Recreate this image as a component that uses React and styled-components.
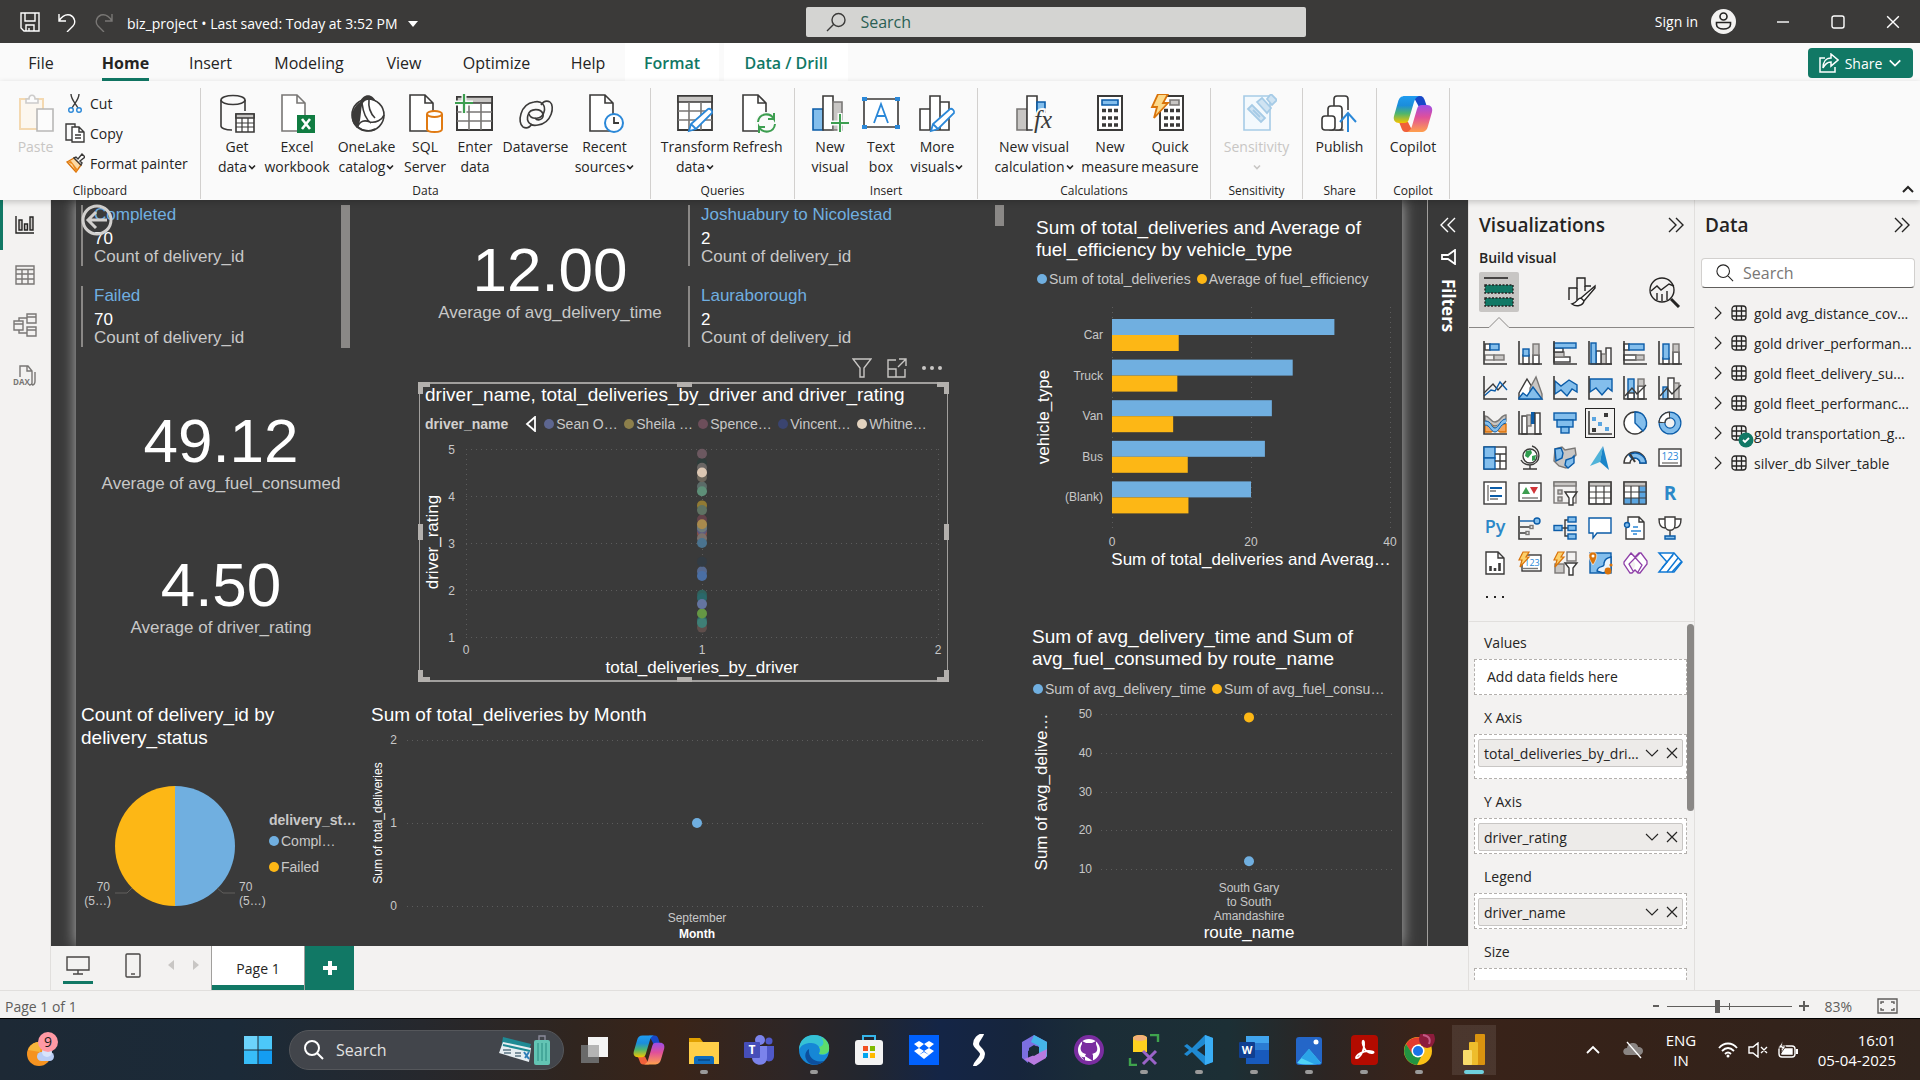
import React from 'react';
import styled, { createGlobalStyle, css } from 'styled-components';

const ui = '"Open Sans", "Noto Sans", sans-serif';
const report = '"Liberation Sans", Arial, sans-serif';

const c = {
  ink: '#252423',
  line: '#3b3a39',
  green: '#117865',
  pane: '#f3f2f1',
  sheet: '#3a3a3a',
  soft: '#c8c8c8',
  blue: '#70afe0',
  gold: '#fdb715',
  bf: '#83beec',
  bs: '#0b5ca8',
  gf: '#c8c6c4',
  gs: '#797775',
};

const GlobalStyle = createGlobalStyle`
  *, *::before, *::after { box-sizing: border-box; }
  body { margin: 0; background: ${c.pane}; color: ${c.ink}; font-family: ${ui}; font-size: 14px; overflow: hidden; }
  button, input { font: inherit; color: inherit; }
  button { padding: 0; border: 0; background: none; cursor: pointer; }
  svg { display: block; flex: none; }
  h2, p, ul, dl, dd { margin: 0; padding: 0; }
  ul { list-style: none; }
`;

/* ---------- shell ---------- */

const Shell = styled.div`
  display: flex;
  flex-direction: column;
  height: 100vh;
`;

const TitleBar = styled.header`
  display: grid;
  grid-template-columns: 42% 26% 1fr;
  align-items: center;
  flex: none;
  height: 43px;
  background: #3b3a39;
  color: #fff;
`;

const QuickTools = styled.div`
  display: flex;
  align-items: center;
  gap: 9px;
  padding-left: 16px;
`;

const IconButton = styled.button`
  display: grid;
  place-items: center;
  flex: none;
  width: ${(p) => p.$w || 20}px;
  height: ${(p) => p.$h || 20}px;
  color: ${(p) => p.$color || 'inherit'};
`;

const FileName = styled.button`
  display: flex;
  align-items: center;
  gap: 10px;
  white-space: nowrap;
  line-height: 20px;
  padding-top: 5px;
`;

const TitleSearch = styled.label`
  display: flex;
  align-items: center;
  gap: 14px;
  height: 30px;
  padding: 0 20px;
  border-radius: 2px;
  background: #d4d4d2;
  color: #3b3a39;
  font-size: 16px;
`;

const BareInput = styled.input`
  flex: 1;
  min-width: 0;
  border: 0;
  outline: 0;
  padding: 0;
  background: none;
  &::placeholder { color: ${(p) => p.$tone}; opacity: 1; }
`;

const WindowTools = styled.div`
  display: flex;
  align-items: center;
  justify-content: flex-end;
`;

const SignIn = styled.button`
  display: flex;
  align-items: center;
  gap: 13px;
  margin-right: 19px;
`;

/* ---------- ribbon ---------- */

const TabRow = styled.nav`
  display: flex;
  align-items: stretch;
  flex: none;
  height: 38px;
  background: #fafafa;
`;

const Tab = styled.button`
  position: relative;
  width: ${(p) => p.$w}px;
  font-size: 16px;
  line-height: 36px;
  padding-top: 2px;
  ${(p) => p.$active && css`
    font-weight: 700;
    &::after {
      content: '';
      position: absolute;
      left: 20px;
      right: 20px;
      bottom: 0;
      height: 3px;
      background: ${c.green};
    }
  `}
  ${(p) => p.$context && css`
    margin-right: 5px;
    background: #fff;
    color: ${c.green};
    font-weight: 600;
  `}
`;

const ShareButton = styled.button`
  display: flex;
  align-items: center;
  justify-content: center;
  gap: 6px;
  width: 105px;
  height: 30px;
  margin: 5px 7px 0 auto;
  border-radius: 4px;
  background: ${c.green};
  color: #fff;
`;

const Ribbon = styled.section`
  position: relative;
  z-index: 2;
  display: flex;
  flex: none;
  height: 119px;
  padding: 7px 0 1px;
  background: #fafafa;
  box-shadow: 0 2px 6px rgba(0, 0, 0, 0.2);
`;

const Group = styled.div`
  display: flex;
  flex-direction: column;
  flex: none;
  padding: 0 9px;
  border-right: 1px solid #d2d0ce;
`;

const GroupBody = styled.div`
  display: flex;
  flex: 1;
`;

const GroupLabel = styled.div`
  font-size: 12px;
  line-height: 16px;
  text-align: center;
`;

const ToolButton = styled.button`
  display: flex;
  flex-direction: column;
  align-items: center;
  width: ${(p) => p.$w}px;
  padding-top: 6px;
  line-height: 20px;
  white-space: nowrap;
  color: ${(p) => (p.$off ? '#c8c6c4' : 'inherit')};
  svg.big { margin-bottom: 3px; }
`;

const ToolLine = styled.span`
  display: flex;
  align-items: center;
  gap: 1px;
  height: 20px;
  font-size: 14px;
`;

const ClipList = styled.div`
  display: flex;
  flex-direction: column;
  width: 129px;
`;

const ClipButton = styled.button`
  display: flex;
  align-items: center;
  gap: 5px;
  height: 30px;
  padding-left: 3px;
  font-size: 14px;
  white-space: nowrap;
`;

const Collapse = styled.div`
  display: flex;
  align-items: flex-end;
  margin-left: auto;
  padding: 0 5px 3px 0;
`;

/* ---------- workspace ---------- */

const Work = styled.main`
  display: flex;
  flex: 1;
  min-height: 0;
`;

const Rail = styled.nav`
  display: flex;
  flex-direction: column;
  flex: none;
  width: 51px;
  border-right: 1px solid #e1dfdd;
`;

const RailButton = styled.button`
  display: grid;
  place-items: center;
  height: 50px;
  border-left: 3px solid ${(p) => (p.$active ? c.green : 'transparent')};
  padding-right: 4px;
  color: ${(p) => (p.$active ? '#252423' : '#797775')};
`;

const Center = styled.div`
  display: flex;
  flex-direction: column;
  flex: 1;
  min-width: 0;
`;

const Stage = styled.div`
  display: flex;
  flex: 1;
  min-height: 0;
  background: #393939;
`;

const Canvas = styled.div`
  display: flex;
  flex: 1;
  min-width: 0;
  padding: 0 25px;
  overflow: hidden;
`;

const Sheet = styled.div`
  position: relative;
  display: flex;
  flex: 1;
  min-width: 0;
  background: ${c.sheet};
  box-shadow: 0 0 14px #b4b4b4;
  color: #fff;
  font-family: ${report};
`;

const SheetLeft = styled.div`
  display: flex;
  flex-direction: column;
  flex: 1;
  min-width: 0;
  padding: 5px 0 0 5px;
`;

const SheetRight = styled.div`
  display: flex;
  flex-direction: column;
  gap: 52px;
  flex: none;
  width: 370px;
  padding-top: 17px;
`;

const Row = styled.div`
  display: flex;
  flex: none;
  height: ${(p) => p.$h}px;
`;

const Filters = styled.aside`
  display: flex;
  flex-direction: column;
  align-items: center;
  gap: 14px;
  width: 41px;
  padding-top: 15px;
  border-left: 1px solid #a19f9d;
  color: #fff;
`;

const FilterLabel = styled.span`
  writing-mode: vertical-rl;
  font-size: 17px;
  font-weight: 700;
  line-height: 20px;
`;

/* ---------- visuals ---------- */

const MultiRow = styled.div`
  display: flex;
  justify-content: space-between;
  align-items: flex-start;
  width: ${(p) => p.$w}px;
`;

const MultiList = styled.dl`
  display: flex;
  flex-direction: column;
  gap: 20px;
`;

const MultiItem = styled.div`
  height: 61px;
  padding-left: 11px;
  border-left: 2px solid #8a8886;
  font-size: 17px;
  line-height: 20px;
  white-space: nowrap;
  dt { color: ${c.blue}; height: 24px; }
  dd + dd { color: ${c.soft}; line-height: 16px; }
`;

const ScrollThumb = styled.div`
  flex: none;
  width: 9px;
  height: ${(p) => p.$h}px;
  background: #8a8886;
`;

const BigCard = styled.div`
  display: flex;
  flex-direction: column;
  align-items: center;
  width: ${(p) => p.$w}px;
  padding-top: ${(p) => p.$top}px;
  white-space: nowrap;
`;

const BigNumber = styled.div`
  font-size: 62px;
  line-height: 61px;
`;

const BigLabel = styled.div`
  color: ${c.soft};
  font-size: 17px;
  line-height: 26px;
`;

const CardColumn = styled.div`
  width: 280px;
`;

const BackButton = styled.button`
  position: absolute;
  left: 5px;
  top: 4px;
  color: #d2d0ce;
`;

const VisualFrame = styled.section`
  position: relative;
  flex: none;
  width: 529px;
  height: 300px;
  border: 2px solid #a19f9d;
  border-width: 2px 1px;
`;

const VisualTools = styled.div`
  display: flex;
  justify-content: flex-end;
  align-items: center;
  gap: 14px;
  height: 29px;
  padding-right: 6px;
  color: #c8c6c4;
`;

const Handle = styled.span`
  position: absolute;
  background: ${(p) => (p.$corner ? 'none' : '#b3b0ad')};
  border: 0 solid #b3b0ad;
  ${(p) => p.$at}
`;

const VisualTitle = styled.h2`
  font-size: 19px;
  line-height: ${(p) => p.$lh || 22}px;
  font-weight: 400;
  white-space: nowrap;
  padding-left: ${(p) => p.$pad || 0}px;
`;

const Legend = styled.ul`
  display: flex;
  align-items: center;
  gap: 6px;
  height: ${(p) => p.$h}px;
  padding-left: ${(p) => p.$pad || 0}px;
  color: ${c.soft};
  font-size: 14px;
  line-height: 18px;
  white-space: nowrap;
  b { color: #d2d0ce; margin-right: 10px; }
`;

const LegendItem = styled.li`
  display: flex;
  align-items: center;
  gap: 2px;
  width: ${(p) => (p.$w ? `${p.$w}px` : 'auto')};
  &::before {
    content: '';
    flex: none;
    width: 10px;
    height: 10px;
    border-radius: 50%;
    background: ${(p) => p.$color};
  }
`;

const SideLegend = styled.ul`
  padding-top: 63px;
  color: ${c.soft};
  font-size: 14px;
  line-height: 26px;
  white-space: nowrap;
  b { display: block; line-height: 16px; }
`;

const PieBox = styled.div`
  padding-top: 28px;
`;

const PieVisual = styled.div`
  width: 290px;
`;

const Tick = styled.text`
  fill: ${c.soft};
  font: 12px ${report};
`;

const AxisTitle = styled.text`
  fill: #fff;
  font: ${(p) => (p.$bold ? 'bold ' : '')}${(p) => (p.$small ? 12 : 17)}px ${report};
  text-anchor: middle;
`;

const Grid = styled.path`
  stroke: #5c5c5c;
  stroke-width: 1;
  stroke-dasharray: 1 4;
  fill: none;
`;

/* ---------- page tabs and status ---------- */

const PageBar = styled.div`
  display: flex;
  flex: none;
  height: 44px;
`;

const ViewButton = styled.button`
  display: grid;
  place-items: center;
  width: ${(p) => p.$w}px;
  height: 38px;
  color: ${(p) => p.$color || '#484644'};
  ${(p) => p.$active && `background: linear-gradient(${c.green}, ${c.green}) center bottom / 30px 3px no-repeat;`}
`;

const PageTab = styled.button`
  width: 94px;
  border: 1px solid #a19f9d;
  border-width: 0 1px;
  background: linear-gradient(${c.green}, ${c.green}) bottom / 100% 5px no-repeat #fff;
`;

const AddPage = styled.button`
  display: grid;
  place-items: center;
  width: 49px;
  background: ${c.green};
  color: #fff;
`;

const StatusBar = styled.footer`
  display: flex;
  align-items: center;
  flex: none;
  height: 29px;
  padding: 3px 22px 0 5px;
  border-top: 1px solid #e1dfdd;
  border-bottom: 1px solid #000;
  color: #605e5c;
`;

const ZoomTools = styled.div`
  display: flex;
  align-items: center;
  gap: 7px;
  margin-left: auto;
`;

const ZoomSlider = styled.input`
  appearance: none;
  width: 125px;
  height: 13px;
  margin: 0;
  background:
    linear-gradient(#605e5c, #605e5c) center / 100% 1px no-repeat,
    linear-gradient(#605e5c, #605e5c) center / 1px 7px no-repeat;
  &::-webkit-slider-thumb {
    appearance: none;
    width: 5px;
    height: 13px;
    background: #605e5c;
  }
`;

const ZoomValue = styled.span`
  margin: 0 17px 0 8px;
`;

/* ---------- side panes ---------- */

const VizPane = styled.aside`
  display: flex;
  flex-direction: column;
  flex: none;
  width: 227px;
  border: 1px solid #e1dfdd;
  border-width: 0 1px;
`;

const PaneHead = styled.div`
  display: flex;
  align-items: center;
  justify-content: space-between;
  height: 50px;
  padding: 0 10px 0 10px;
  h2 { font-size: 19px; font-weight: 600; line-height: 24px; }
`;

const BuildTitle = styled.div`
  height: 22px;
  padding-left: 10px;
  font-weight: 600;
  font-size: 14px;
  line-height: 16px;
`;

const BuildTabs = styled.div`
  display: flex;
  justify-content: space-between;
  padding: 0 9px 5px 10px;
`;

const BuildTab = styled.button`
  display: grid;
  place-items: center;
  width: 40px;
  height: 40px;
  border-radius: 2px;
  background: ${(p) => (p.$active ? '#c8c6c4' : 'none')};
`;

const VizGrid = styled.div`
  display: grid;
  grid-template-columns: repeat(6, 35px);
  grid-auto-rows: 35px;
  padding: 7px 0 0 8px;
`;

const VizButton = styled.button`
  display: grid;
  place-items: center;
  width: 30px;
  height: 30px;
  margin: auto;
  border: 1px solid ${(p) => (p.$active ? '#252423' : 'transparent')};
`;

const MoreViz = styled.button`
  height: 42px;
  padding: 0 0 8px 14px;
  text-align: left;
  border-bottom: 1px solid #e1dfdd;
`;

const Wells = styled.div`
  display: flex;
  flex: 1;
  min-height: 0;
  margin-bottom: 10px;
  overflow: hidden;
`;

const WellList = styled.div`
  flex: 1;
  min-width: 0;
  padding: 11px 0 0 5px;
`;

const WellLabel = styled.div`
  padding-left: 10px;
  font-size: 14px;
  line-height: 20px;
`;

const WellBox = styled.div`
  height: ${(p) => p.$h || 36}px;
  margin: 6px 0 13px;
  padding: 4px 3px;
  border: 1px dashed #b3b0ad;
  background: #fff;
`;

const EmptyWell = styled.p`
  padding-left: 9px;
  line-height: 26px;
  font-size: 14px;
`;

const Chip = styled.div`
  display: flex;
  align-items: center;
  height: 28px;
  padding: 0 4px 0 5px;
  border: 1px solid #c8c6c4;
  border-radius: 2px;
  background: #edebe9;
  font-size: 14px;
  span { flex: 1; min-width: 0; white-space: nowrap; }
  button + button { margin-left: 7px; }
`;

const WellScroll = styled.div`
  flex: none;
  width: 7px;
  height: 187px;
  margin-top: 2px;
  border-radius: 4px;
  background: #8a8886;
`;

const DataPane = styled.aside`
  flex: none;
  width: 225px;
`;

const DataSearch = styled.label`
  display: flex;
  align-items: center;
  gap: 9px;
  height: 30px;
  margin: 8px 5px 10px 6px;
  padding: 0 14px;
  border: 1px solid #d2d0ce;
  border-bottom-color: #605e5c;
  border-radius: 4px;
  background: #fff;
  font-size: 16px;
`;

const TableRow = styled.button`
  display: flex;
  align-items: center;
  width: 100%;
  height: 30px;
  padding-left: 18px;
  white-space: nowrap;
  svg + svg { margin: 0 7px 0 8px; }
`;

/* ---------- taskbar ---------- */

const Taskbar = styled.nav`
  display: flex;
  align-items: center;
  flex: none;
  height: 61px;
  color: #fff;
  background: linear-gradient(90deg, #1d2935 0, #1b2a38 12%, #26282d 22%, #30251f 30%, #3a2418 35%, #2e2626 41%, #22262f 45%, #142546 49%, #16253c 53%, #1b2d37 57%, #1c2f35 64%, #2c2523 69%, #3a2319 74%, #352219 85%, #31241d 100%);
`;

const Weather = styled.button`
  width: 230px;
  padding-left: 25px;
`;

const TaskButton = styled.button`
  position: relative;
  display: grid;
  place-items: center;
  width: 55px;
  height: 54px;
  ${(p) => p.$active && css`
    background: linear-gradient(rgba(255,255,255,.09), rgba(255,255,255,.09)) center / 44px 50px no-repeat;
  `}
  &::after {
    content: '';
    display: ${(p) => (p.$run ? 'block' : 'none')};
    position: absolute;
    bottom: 3px;
    width: ${(p) => (p.$active ? 20 : 8)}px;
    height: 4px;
    border-radius: 2px;
    background: ${(p) => (p.$active ? '#6fd0dd' : '#9a9a9a')};
  }
`;

const TaskSearch = styled.label`
  display: flex;
  align-items: center;
  gap: 12px;
  width: 275px;
  height: 40px;
  margin: 0 2px 0 4px;
  padding: 0 11px 0 14px;
  border: 1px solid #55575b;
  border-radius: 20px;
  background: #42454b;
  font-size: 16px;
`;

const Tray = styled.div`
  display: flex;
  align-items: center;
  margin-left: auto;
  padding-right: 24px;
`;

const TrayText = styled.div`
  width: ${(p) => p.$w}px;
  font-size: 15px;
  line-height: 20px;
  text-align: ${(p) => p.$align};
`;

/* ---------- icons ---------- */

const Svg = ({ s = 24, w = s, h = s, vb, sw = 1.4, children, ...rest }) => (
  <svg width={w} height={h} viewBox={vb || `0 0 ${w} ${h}`} fill="none" stroke="currentColor" strokeWidth={sw} aria-hidden="true" {...rest}>{children}</svg>
);

const Box = ({ x, y, w, h, t = 'w' }) => {
  const map = { w: ['#fff', c.line], b: [c.bf, c.bs], g: [c.gf, c.gs], n: ['none', c.line], d: ['none', c.gs] };
  return <rect x={x} y={y} width={w} height={h} fill={map[t][0]} stroke={map[t][1]} />;
};
const Axes = () => <path d="M1 0V23H24" stroke={c.line} strokeWidth="1.6" />;
const Bolt = () => <path d="M5 1h6L8 6h3L2 16l2-7H1z" fill="#fcd06a" stroke="#d9730a" strokeWidth="1.2" />;

const Chevron = ({ s = 8, sw = 1.6 }) => <Svg w={s} h={s} vb="0 0 8 8" sw={sw}><path d="m1 2.500 3 3 3-3" /></Svg>;
const Angles = ({ left }) => <Svg w={16} h={16}><path d={left ? 'm8 1-7 7 7 7M15 1 8 8l7 7' : 'm1 1 7 7-7 7M8 1l7 7-7 7'} /></Svg>;
const Cross = ({ s = 12, sw = 1.2 }) => <Svg s={s} vb="0 0 12 12" sw={sw}><path d="m1 1 10 10M11 1 1 11" /></Svg>;
const Lens = ({ s = 20, flip, sw = 1.4 }) => (
  <Svg s={s} vb="0 0 20 20" sw={sw}>
    {flip ? <path d="M7.500 12.500 1 19M6 8a6.500 6.500 0 1 0 13 0A6.500 6.500 0 1 0 6 8z" /> : <path d="m13 13 6 6M1 8a7 7 0 1 0 14 0A7 7 0 1 0 1 8z" />}
  </Svg>
);

const CopilotMark = ({ s, id }) => (
  <Svg s={s} vb="0 0 40 40" stroke="none">
    <defs>
      <linearGradient id={`${id}a`} x1="0" y1="0" x2="0" y2="1"><stop offset="0" stopColor="#1f9cf0" /><stop offset=".35" stopColor="#1b8ddb" /><stop offset=".65" stopColor="#4fb56d" /><stop offset="1" stopColor="#f5c400" /></linearGradient>
      <linearGradient id={`${id}b`} x1="0" y1="0" x2="0" y2="1"><stop offset="0" stopColor="#9d4de8" /><stop offset=".45" stopColor="#e0509a" /><stop offset="1" stopColor="#ffa04d" /></linearGradient>
    </defs>
    <path d="M20 2h7c3 0 4 2 5 5l2 6h-8z" fill="#1748c8" />
    <path d="M20 38h-7c-3 0-4-2-5-5l-2-5h9z" fill="#f0603a" />
    <path d="M12 2h14c-3 1-4 3-5 6l-5 17c-1 3-2 4-5 4H6c-4 0-6-3-5-7l4-14c1-4 3-6 7-6z" fill={`url(#${id}a)`} />
    <path d="M28 38H14c3-1 4-3 5-6l5-17c1-3 2-4 5-4h5c4 0 6 3 5 7l-4 14c-1 4-3 6-7 6z" fill={`url(#${id}b)`} />
  </Svg>
);

const pageD = 'M5 1h15l8 8v28H5z M20 1v8h8';
const BigIcon = ({ children }) => <Svg s={40} className="big" stroke={c.line} sw={1.6}>{children}</Svg>;
const pencil = <path d="m14 37 2-7 17-15c2-1 5 2 4 4L21 35zM16 30l5 5" fill="#fff" stroke="#2b88d8" strokeWidth="1.800" />;

const big = {
  paste: <g opacity=".5"><path d="M4 5h23v30H4z" stroke="#efb96a" fill="#fff6e6" strokeWidth="2" /><path d="M10 9V5h3c0-5 6-5 6 0h3v4z" fill="#fff" stroke="#a19f9d" /><path d="M21 15h16v22H21z" fill="#fff" stroke="#797775" /></g>,
  get: <><ellipse cx="16" cy="6" rx="12" ry="4.500" /><path d="M4 6v26c0 2 4 4 11 4M28 6v11" /><path d="M19 20h18v18H19z" fill="#fff" /><path d="M19 20h18v4H19z" fill={c.gf} /><path d="M19 29h18M19 33h18M25 24v14M31 24v14" strokeWidth="1.2" /></>,
  excel: <><path d={pageD} stroke="#797775" fill="#fff" /><rect x="20" y="21" width="18" height="18" fill="#107c41" stroke="none" /><path d="m25 25 8 10M33 25l-8 10" stroke="#fff" strokeWidth="2.600" /></>,
  lake: <><circle cx="21" cy="21" r="16" fill="#fff" /><path d="M13 8c3-9 13-9 16 0-5-3-10-3-13 1-3 6-1 14-5 25C3 30 2 16 13 8z" fill={c.line} stroke="none" /><path d="M15 9c1 8 3 16 9 20M22 6c-1 8 2 14 6 18M10 34c3-8 8-8 13-6 6 1 12-2 14-7M11 33c5 4 12 5 17 2" /></>,
  sql: <><path d={pageD} fill="#fff" /><path d="M22 20v15c0 4 15 4 15 0V20" fill="#fff" stroke="#e07a12" strokeWidth="2" /><ellipse cx="29.500" cy="20" rx="7.500" ry="3" fill="#fff" stroke="#e07a12" strokeWidth="2" /></>,
  enter: <><path d="M2 3h35v33H2z" fill="#fff" strokeWidth="2" /><path d="M2 3h35v6H2z" fill={c.gf} /><path d="M2 18h35M2 27h35M14 9v27M26 9v27" stroke="#797775" /><path d="M9 0v20M0 9h18" stroke="#fafafa" strokeWidth="5" /><path d="M9 0v19M0 9h18" stroke="#3d9e50" strokeWidth="2.200" /></>,
  verse: <><path d="M34 8c5 4 2 21-12 23-8 2-12-4-10-10 2-7 13-7 15-1 1 5-5 8-8 4" /><path d="M7 33C1 29 4 10 18 8c8-2 12 4 10 10-2 8-13 8-15 2" /><path d="M34 8c-4-2-7 0-9 3M7 33c4 2 7 0 9-3" /></>,
  recent: <><path d={pageD} fill="#fff" /><circle cx="29" cy="29" r="9" fill="#fff" stroke="#2b88d8" strokeWidth="2" /><path d="M29 23v6h5" strokeWidth="1.800" /></>,
  transform: <><path d="M3 2h34v34H3z" fill="#fff" strokeWidth="1.800" /><path d="M3 2h34v6H3z" fill={c.gf} /><path d="M3 17h34M3 26h34M14 8v28M26 8v28" stroke="#797775" />{pencil}</>,
  refresh: <><path d={pageD} fill="#fff" /><circle cx="28" cy="29" r="11" fill="#fafafa" stroke="none" /><path d="M20 28c1-9 12-10 16-3v-6M36 25h-6M37 30c-1 9-12 10-16 3v6M21 33h6" stroke="#3d9e50" strokeWidth="2" /></>,
  visual: <><path d="M3 15h10v21H3z" fill={c.bf} stroke={c.bs} /><path d="M13 2h10v34H13z" fill="#fff" /><path d="M23 8h9v28h-9z" fill={c.gf} stroke={c.gs} /><path d="M30 19v19M21 29h18" stroke="#fafafa" strokeWidth="5" /><path d="M30 20v18M21 29h18" stroke="#3d9e50" strokeWidth="2" /></>,
  text: <><path d="M3 5h34v28H3z" fill="#fff" /><path d="M1 3h5v4H1zM34 3h5v4h-5zM1 31h5v4H1zM34 31h5v4h-5z" fill="#2b88d8" stroke="none" /><path d="m13 29 7-19 7 19M15.500 22h9" stroke="#2b88d8" strokeWidth="1.800" /></>,
  more: <><path d="M3 15h10v21H3zM13 2h10v34H13zM23 8h9v28h-9z" fill="#fff" />{pencil}</>,
  fx: <><path d="M3 15h10v21H3z" fill={c.gf} stroke={c.gs} /><path d="M13 2h10v34H13z" fill="#fff" /><path d="M23 8h8v10h-8z" fill={c.bf} stroke={c.bs} /><text x="20" y="34" fontFamily="Liberation Serif" fontStyle="italic" fontSize="25" stroke="#fafafa" strokeWidth="4" paintOrder="stroke" fill={c.line}>fx</text></>,
  calc: <><path d="M8 2h24v34H8z" fill="#fff" strokeWidth="2" /><path d="M12 6h16v5H12z" fill={c.bf} stroke={c.bs} /><path d="M12 16.500h16M12 24h16M12 31h16" strokeWidth="3.600" strokeDasharray="4 2" /></>,
  quick: <><path d="M10 2h23v34H10z" fill="#fff" strokeWidth="2" /><path d="M20 6h9v5h-9z" fill={c.gf} stroke={c.gs} /><path d="M14 16.500h16M14 24h16M14 31h16" strokeWidth="3.600" strokeDasharray="4 2" /><path d="M8 0h10l-5 9h5L4 24l3-11H2z" fill="#fcd98a" stroke="#d9730a" strokeWidth="1.800" /></>,
  sens: <g stroke="#a6cbe6"><path d="M7 2h26v34H7z" fill="#f3f9fd" /><path d="m11 15 4-4 13 13-4 4zM16 16l7 7M20 8l10 11 4-5-9-10zM30 5l4-5 6 6-5 5z" fill="#cfe3f2" strokeWidth="1.800" /></g>,
  publish: <><rect x="14" y="2" width="14" height="34" rx="3" fill="#fff" /><rect x="8" y="12" width="14" height="24" rx="3" fill="#fff" /><rect x="2" y="22" width="13" height="14" rx="3" fill="#fff" /><path d="M28 16v22" stroke="#fafafa" strokeWidth="9" /><path d="M28 38V20M20 28l8-9 8 9" stroke="#2b88d8" strokeWidth="2" /></>,
};

const vizIcons = [
  ['Stacked bar chart', <><Box x={2} y={3} w={5} h={6} /><Box x={7} y={3} w={9} h={6} t="b" /><Box x={2} y={14} w={9} h={5} t="d" /><Box x={11} y={14} w={10} h={5} t="g" /><Axes /></>],
  ['Stacked column chart', <><Box x={5} y={14} w={6} h={9} /><Box x={5} y={8} w={6} h={7} t="b" /><Box x={15} y={14} w={6} h={9} /><Box x={15} y={3} w={6} h={11} t="g" /><Axes /></>],
  ['Clustered bar chart', <><Box x={1} y={16} w={16} h={5} /><Box x={1} y={11} w={10} h={5} t="g" /><Box x={1} y={7} w={9} h={4} /><Box x={1} y={2} w={22} h={5} t="b" /><Axes /></>],
  ['Clustered column chart', <><Box x={18} y={7} w={5} h={16} /><Box x={13} y={13} w={5} h={10} t="g" /><Box x={8} y={10} w={5} h={13} /><Box x={3} y={2} w={5} h={21} t="b" /><Axes /></>],
  ['100% stacked bar chart', <><Box x={1} y={3} w={5} h={6} /><Box x={6} y={3} w={15} h={6} t="b" /><Box x={1} y={14} w={12} h={5} /><Box x={13} y={14} w={8} h={5} t="g" /><Axes /></>],
  ['100% stacked column chart', <><Box x={5} y={17} w={6} h={6} /><Box x={5} y={3} w={6} h={15} t="b" /><Box x={15} y={11} w={6} h={12} /><Box x={15} y={3} w={6} h={8} t="g" /><Axes /></>],
  ['Line chart', <><path d="m1 17 9-9 5 6 8-9" stroke={c.line} /><path d="m1 20 7-6 4 1 5-9 7 8" stroke={c.bs} /><Axes /></>],
  ['Area chart', <><path d="m1 17 8-14 8 13v7H1z" fill="#fff" stroke={c.line} /><path d="m12 12 6-11 6 17v5H12z" fill={c.gf} stroke={c.gs} /><path d="m1 22 4-5 4 3 6-9 9 12H1z" fill={c.bf} stroke={c.bs} /></>],
  ['Stacked area chart', <><path d="M2 5l6 5 8-6 8 5v7l-5-3-5 7-6-6-6 4z" fill={c.bf} stroke={c.bs} /><Axes /></>],
  ['100% stacked area chart', <><path d="M2 3h22v12l-4-3-6 7-6-7-6 4z" fill={c.bf} stroke={c.bs} /><Axes /></>],
  ['Line and stacked column chart', <><Box x={5} y={3} w={6} h={20} t="b" /><Box x={5} y={17} w={6} h={6} /><Box x={15} y={10} w={6} h={13} /><Box x={15} y={3} w={6} h={7} t="g" /><path d="m2 20 7-8 5 6 9-9" stroke={c.line} /><Axes /></>],
  ['Line and clustered column chart', <><Box x={5} y={11} w={5} h={12} t="b" /><Box x={10} y={2} w={6} h={21} /><Box x={16} y={7} w={5} h={16} t="g" /><path d="m2 20 7-8 5 6 9-9" stroke={c.line} /><Axes /></>],
  ['Ribbon chart', <><path d="M2 5c5 0 5 6 10 6s6-7 11-7v6c-5 0-6 5-11 5S7 10 2 10z" fill={c.gf} stroke={c.gs} /><path d="M2 13h6l4 5 5-5h6v8h-6l-4-3-5 3H2z" fill="#f2a35a" stroke="#d9730a" /><path d="M2 12c6 0 6 7 10 7s5-9 11-9" stroke={c.bf} strokeWidth="4" /><path d="M2 10c7 0 6 7 10 7s5-9 11-9M2 14c5 0 6 7 10 7s5-8 11-9" stroke={c.bs} strokeWidth="1" /><Axes /></>],
  ['Waterfall chart', <><Box x={4} y={5} w={5} h={18} /><Box x={9} y={4} w={4} h={11} t="g" /><rect x="13" y="1" width="4" height="12" fill={c.bs} stroke="none" /><Box x={17} y={2} w={5} h={21} /><Axes /></>],
  ['Funnel', <><Box x={1} y={2} w={22} h={7} t="b" /><Box x={4} y={9} w={16} h={7} t="b" /><Box x={8} y={16} w={8} h={6} t="b" /></>],
  ['Scatter chart', <><path d="M16 2h4v4h-4zM4 17h4v4H4z" fill={c.line} stroke="none" /><path d="M4 6h4v4H4zM10 11h4v4h-4zM17 16h4v4h-4z" fill="#5ba5e0" stroke="none" /><Axes /></>],
  ['Pie chart', <><circle cx="12" cy="12" r="11" fill="#fff" stroke={c.line} /><path d="M12 1a11 11 0 0 1 8 19l-8-8z" fill={c.bf} stroke={c.bs} /></>],
  ['Donut chart', <><circle cx="12" cy="12" r="8" stroke={c.bs} strokeWidth="7" /><circle cx="12" cy="12" r="8" stroke={c.bf} strokeWidth="4.600" /><path d="M12 4a8 8 0 0 0-8 8" stroke={c.line} strokeWidth="7" /><path d="M11 4a8 8 0 0 0-7 7" stroke="#fff" strokeWidth="4.600" /></>],
  ['Treemap', <><Box x={1} y={1} w={22} h={22} /><Box x={1} y={1} w={11} h={11} t="b" /><Box x={1} y={12} w={11} h={11} t="b" /><path d="M12 8h11M17 8v15M17 15h6M12 15h5" stroke={c.line} /></>],
  ['Map', <><circle cx="12" cy="10" r="7" fill="#fff" stroke={c.line} /><path d="m8 5 5-1 1 3-4 5-3-2zM14 10l4-1-1 5-3 1z" fill="#2f9e4f" stroke="none" /><path d="M14 0c9 2 10 18-2 19-5 0-8-3-9-5M12 19v4M5 23h14" stroke={c.line} /></>],
  ['Filled map', <><path d="M2 3 9 1l3 3 10-2 1 7-4 4-1 6-5 3-7-2-5-5z" fill={c.gf} stroke={c.gs} /><path d="m2 3 6-1 2 5-1 5-6 3zM13 14l6-2 2-2v7l-6 5-3-3z" fill={c.bf} stroke={c.bs} /></>],
  ['Azure map', <><path d="M15 0 2 20l10-4z" fill="#4fb3d9" stroke="none" /><path d="m15 0 6 24-9-8z" fill="#1a85c9" stroke="none" /></>],
  ['Gauge', <><path d="M1 17a11 11 0 0 1 22 0h-6a5 5 0 0 0-10 0z" fill="#fff" stroke={c.line} /><path d="M6 9a11 11 0 0 1 17 8h-6a5 5 0 0 0-8-4z" fill={c.bf} stroke={c.bs} /><path d="m12 16-5-8" stroke={c.line} strokeWidth="2" /></>],
  ['Card', <><Box x={1} y={3} w={22} h={17} /><text x="12" y="14" textAnchor="middle" fontFamily="Open Sans" fontSize="10" fill="#2b88d8" stroke="none">123</text><path d="M4 17h16" stroke={c.gs} /></>],
  ['Multi-row card', <><Box x={1} y={1} w={22} h={22} /><path d="M5 4v16" stroke={c.gs} /><path d="M7 7h12M7 15h12" stroke={c.bs} strokeWidth="2" /><path d="M7 10h6M7 18h8" stroke={c.gs} /></>],
  ['KPI', <><Box x={1} y={2} w={22} h={18} /><path d="m4 13 4-7 4 7z" fill="#3d9e50" stroke="none" /><path d="m12 6 4 7 4-7z" fill="#d13438" stroke="none" /><path d="M4 17h16" stroke={c.gs} /></>],
  ['Slicer', <><Box x={1} y={1} w={22} h={21} t="d" /><Box x={1} y={1} w={22} h={4} t="g" /><Box x={5} y={9} w={4} h={4} t="g" /><Box x={5} y={16} w={4} h={4} t="g" /><path d="M12 11h12l-4 6v7h-4v-7z" fill="#fff" stroke={c.line} /></>],
  ['Table', <><Box x={1} y={1} w={22} h={22} /><Box x={1} y={1} w={22} h={4} t="g" /><path d="M1 11h22M1 17h22M8 5v18M16 5v18M1 1v22h22V1z" stroke={c.line} strokeWidth="1.200" /></>],
  ['Matrix', <><Box x={1} y={1} w={22} h={22} /><path d="M16 5h7v18H1v-6h15z" fill="#5ba5e0" stroke="none" /><Box x={1} y={1} w={22} h={4} t="g" /><path d="M1 11h22M1 17h22M8 5v18M16 5v18M1 1v22h22V1z" stroke={c.line} strokeWidth="1.200" /></>],
  ['R script visual', <text x="12" y="19" textAnchor="middle" fontFamily="Open Sans" fontWeight="700" fontSize="19" fill="#2b88c8" stroke="none">R</text>],
  ['Python visual', <text x="12" y="17" textAnchor="middle" fontFamily="Open Sans" fontWeight="600" fontSize="18" fill="#2b88c8" stroke="none">Py</text>],
  ['Key influencers', <><path d="M2 5h15" stroke={c.bs} /><circle cx="19" cy="5" r="3" fill={c.bf} stroke={c.bs} /><path d="M2 11h10M2 17h6" stroke={c.line} /><rect x="12" y="9.500" width="3" height="3" stroke={c.gs} /><rect x="8" y="15.500" width="3" height="3" stroke={c.gs} /><Axes /></>],
  ['Decomposition tree', <><path d="M9 12h6M12 12V4h3M12 12v8h3" stroke={c.line} /><Box x={1} y={9.5} w={8} h={5} t="b" /><Box x={15} y={1} w={8} h={5} t="b" /><Box x={15} y={9.5} w={8} h={5} t="b" /><Box x={15} y={18} w={8} h={5} t="b" /></>],
  ['Q&A', <path d="M1 2h22v15H9l-4 5v-5H1z" fill="#fff" stroke={c.bs} />],
  ['Narrative', <><path d="M3 12v11h18V6l-5-5H5v6M16 1v5h5" fill="#fff" stroke={c.line} /><path d="M10 11h5M8 15h10M10 18h4" stroke="#2b88d8" /><circle cx="4" cy="9" r="2.500" fill={c.bf} stroke={c.bs} /></>],
  ['Goals', <><path d="M7 1h10v8c0 7-10 7-10 0zM7 3H1c0 6 2 9 6 9M17 3h6c0 6-2 9-6 9M12 14v6" fill="#fff" stroke={c.line} /><path d="M7 20h10v3H7z" fill={c.bf} stroke={c.bs} /></>],
  ['Paginated report', <><path d="M3 1h12l6 6v16H3zM15 1v6h6" fill="#fff" stroke={c.line} /><path d="M7.500 20v-5M12 20v-3M16.500 20v-8" stroke={c.line} strokeWidth="2.600" /></>],
  ['Card (new)', <><Box x={4} y={4} w={19} h={16} /><text x="14" y="15" textAnchor="middle" fontFamily="Open Sans" fontSize="9" fill="#2b88d8" stroke="none">123</text><path d="M5 17.500h15" stroke={c.gs} /><Bolt /></>],
  ['Slicer (new)', <><Box x={14} y={1} w={9} h={9} t="d" /><Box x={2} y={13} w={9} h={9} t="g" /><Bolt /><path d="M12 12h12l-4 5v7h-4v-7z" fill="#fff" stroke={c.line} /></>],
  ['ArcGIS map', <><Box x={2} y={2} w={21} h={20} t="b" /><path d="M9 20c1-7 8-2 7-8 1-4 3-5 7-6v13l-8 3z" fill="#eaf4fc" stroke={c.bs} /><path d="M5 14C-1 6 0 1 5 1s5 6 0 13z" fill="#d9730a" stroke="#fff" strokeWidth=".6" /><circle cx="5" cy="5" r="1.500" fill="#fff" stroke="none" /><circle cx="20" cy="20" r="3.400" fill="#d9730a" stroke="none" /><circle cx="23" cy="14" r="1.600" fill="#d9730a" stroke="none" /></>],
  ['Power Apps', <path d="m8 2 4 4 4-4h2l6 8v3l-7 9h-2l-3-3-3 3H7L1 13v-2zM8 2l11 12-4 7M17 2 6 13l4 7" fill="#fff" stroke="#8e3fa8" strokeWidth="1.300" />],
  ['Power Automate', <><path d="M1 2h15l8 9-8 10H1l8-10z" fill="#fff" stroke="#0f78d4" strokeWidth="1.500" /><path d="M9 11 16 2M4 17l11-13M9 21 20 7M14 21l9-10" stroke="#0f78d4" /></>],
];

const TableIcon = ({ checked }) => (
  <Svg w={16} h={16} overflow="visible" sw={1.3}>
    <rect x="1" y="1" width="14" height="14" rx="3" /><path d="M1 6h14M1 11h14M5.500 1v14M10.500 1v14" />
    {checked && <g stroke="none"><circle cx="15" cy="15" r="7.500" fill={c.green} /><path d="m12 15 2 2 4-4" stroke="#fff" strokeWidth="1.800" /></g>}
  </Svg>
);

/* ---------- charts ---------- */

const Dots = ({ points }) => points.map(([x, y, fill], i) => <circle key={i} cx={x} cy={y} r="5" fill={fill} />);

const scatterPoints = [
  [1.2, '#5f4e4b'], [1.35, '#2f6b68'], [1.3, '#3f7f76'], [1.5, '#659744'], [1.9, '#2f625d'], [1.83, '#2a686a'], [1.7, '#6474a0'],
  [2.4, '#56698f'], [2.3, '#4a6fa5'], [2.6, '#323b43'], [3.5, '#63434a'], [3.2, '#8a5048'], [3.28, '#5d5a80'], [3.1, '#7a706c'],
  [3, '#4a738f'], [3.33, '#6c7a7a'], [3.4, '#a98a4d'], [3.8, '#917a33'], [3.7, '#5f7363'], [4.2, '#5b6b68'], [4.1, '#5e8f78'],
  [4.7, '#2f3d3b'], [4.6, '#6a6664'], [4.4, '#6b655b'], [4.5, '#dcc7b3'], [4.9, '#6c5860'],
];

function DriverScatter() {
  const x = (v) => 46 + v * 236;
  const y = (v) => 7 + (5 - v) * 47;
  return (
    <svg width="527" height="238" role="img" aria-label="driver_rating by total_deliveries_by_driver">
      {[1, 2, 3, 4, 5].map((v) => (
        <g key={v}><Grid d={`M${x(0)} ${y(v) + 0.5}H${x(2)}`} /><Tick x="35" y={y(v) + 5} textAnchor="end">{v}</Tick></g>
      ))}
      {[0, 1, 2].map((v) => (
        <g key={v}><Grid d={`M${x(v) + 0.5} ${y(5)}V${y(1)}`} /><Tick x={x(v)} y="212" textAnchor="middle">{v}</Tick></g>
      ))}
      <Dots points={scatterPoints.map(([v, f]) => [x(1), y(v), f])} />
      <AxisTitle x={x(1)} y="231">total_deliveries_by_driver</AxisTitle>
      <AxisTitle transform="translate(18 100) rotate(-90)">driver_rating</AxisTitle>
    </svg>
  );
}

const vehicles = [['Car', 32, 9.6], ['Truck', 26, 9.4], ['Van', 23, 8.8], ['Bus', 22, 10.9], ['(Blank)', 20, 11]];

function VehicleBars() {
  const x = (v) => 80 + (v * 278) / 40;
  const y = (i) => 22 + (i * 203) / 5;
  return (
    <svg width="370" height="277" role="img" aria-label="total_deliveries and fuel_efficiency by vehicle_type">
      {[0, 20, 40].map((v) => (
        <g key={v}><Grid d={`M${x(v) + 0.5} 10V235`} /><Tick x={x(v)} y="249" textAnchor="middle">{v}</Tick></g>
      ))}
      {vehicles.map(([name, deliveries, fuel], i) => (
        <g key={name}>
          <Tick x="71" y={y(i) + 20} textAnchor="end">{name}</Tick>
          <rect x={x(0)} y={y(i)} width={x(deliveries) - x(0)} height="16" fill={c.blue} />
          <rect x={x(0)} y={y(i) + 16} width={x(fuel) - x(0)} height="16" fill={c.gold} />
        </g>
      ))}
      <AxisTitle x={x(20)} y="268">Sum of total_deliveries and Averag…</AxisTitle>
      <AxisTitle transform="translate(17 120) rotate(-90)">vehicle_type</AxisTitle>
    </svg>
  );
}

function RouteChart() {
  const y = (v) => 6 + ((50 - v) * 155) / 40;
  return (
    <svg width="370" height="237" role="img" aria-label="avg_delivery_time and avg_fuel_consumed by route_name">
      {[10, 20, 30, 40, 50].map((v) => (
        <g key={v}><Grid d={`M69 ${Math.round(y(v)) + 0.5}H361`} /><Tick x="60" y={y(v) + 4} textAnchor="end">{v}</Tick></g>
      ))}
      <Dots points={[[217, y(49.12), c.gold], [217, y(12), c.blue]]} />
      {['South Gary', 'to South', 'Amandashire'].map((t, i) => <Tick key={t} x="217" y={184 + i * 14} textAnchor="middle">{t}</Tick>)}
      <AxisTitle x="217" y="230">route_name</AxisTitle>
      <AxisTitle transform="translate(15 84) rotate(-90)">Sum of avg_delive…</AxisTitle>
    </svg>
  );
}

function MonthChart() {
  const y = (v) => 14 + (2 - v) * 83;
  return (
    <svg width="620" height="216" role="img" aria-label="total_deliveries by Month">
      {[0, 1, 2].map((v) => (
        <g key={v}><Grid d={`M36 ${y(v) + 0.5}H613`} /><Tick x="26" y={y(v) + 4} textAnchor="end">{v}</Tick></g>
      ))}
      <Dots points={[[326, y(1), c.blue]]} />
      <Tick x="326" y="196" textAnchor="middle">September</Tick>
      <AxisTitle $small $bold x="326" y="212">Month</AxisTitle>
      <AxisTitle $small transform="translate(11 97) rotate(-90)">Sum of total_deliveries</AxisTitle>
    </svg>
  );
}

function StatusPie() {
  return (
    <svg width="188" height="145" role="img" aria-label="Completed 70, Failed 70">
      <path d="M94 9a60 60 0 0 1 0 120z" fill={c.blue} />
      <path d="M94 9a60 60 0 0 0 0 120z" fill={c.gold} />
      <path d="M34 116h12l5-5M136 111l6 5h12" fill="none" stroke="#605e5c" />
      <Tick x="29" y="114" textAnchor="end">70</Tick><Tick x="30" y="128" textAnchor="end">(5…)</Tick>
      <Tick x="158" y="114">70</Tick><Tick x="158" y="128">(5…)</Tick>
    </svg>
  );
}

/* ---------- sections ---------- */

function TitleStrip() {
  return (
    <TitleBar>
      <QuickTools>
        <IconButton $w={28} aria-label="Save"><Svg s={20}><path d="M1 1h18v18H4l-3-3zM5 1v8h10V1M6 19v-6h8v6M9 19v-3" /></Svg></IconButton>
        <IconButton $w={28} aria-label="Undo"><Svg s={20}><path d="M2 2v7h7M2 9C5 4 9 2 13 3c5 2 6 8 3 11l-6 6" /></Svg></IconButton>
        <IconButton $w={28} aria-label="Redo" $color="#797775"><Svg s={20}><path d="M18 2v7h-7M18 9C15 4 11 2 7 3c-5 2-6 8-3 11l6 6" /></Svg></IconButton>
        <FileName>biz_project&nbsp;•&nbsp;Last saved: Today at 3:52 PM <Svg w={10} h={6} stroke="none"><path d="M0 0h10L5 6z" fill="#fff" /></Svg></FileName>
      </QuickTools>
      <TitleSearch><Lens flip /><BareInput $tone="#2b5f54" placeholder="Search" aria-label="Search commands" /></TitleSearch>
      <WindowTools>
        <SignIn>Sign in
          <Svg s={25} stroke="none"><circle cx="12.500" cy="12.500" r="12.500" fill="#f3f2f1" /><circle cx="12.500" cy="7.500" r="3.500" stroke="#252423" strokeWidth="1.600" /><path d="M5.500 13.500h14v2c0 6-14 6-14 0z" stroke="#252423" strokeWidth="1.600" /></Svg>
        </SignIn>
        <IconButton $w={55} $h={43} aria-label="Minimize"><Svg s={14}><path d="M1 7h12" /></Svg></IconButton>
        <IconButton $w={55} $h={43} aria-label="Maximize"><Svg s={14}><rect x="1" y="1" width="12" height="12" rx="2" /></Svg></IconButton>
        <IconButton $w={55} $h={43} aria-label="Close"><Cross s={14} /></IconButton>
      </WindowTools>
    </TitleBar>
  );
}

const tabs = [['File', 82], ['Home', 87, 'active'], ['Insert', 83], ['Modeling', 114], ['View', 76], ['Optimize', 109], ['Help', 74], ['Format', 94, 'ctx'], ['Data / Drill', 124, 'ctx']];

const groups = [
  ['Data', [['get', 54, 'Get', 'data', 1], ['excel', 66, 'Excel', 'workbook'], ['lake', 73, 'OneLake', 'catalog', 1], ['sql', 44, 'SQL', 'Server'], ['enter', 56, 'Enter', 'data'], ['verse', 65, 'Dataverse'], ['recent', 73, 'Recent', 'sources', 1]]],
  ['Queries', [['transform', 70, 'Transform', 'data', 1], ['refresh', 55, 'Refresh']]],
  ['Insert', [['visual', 52, 'New', 'visual'], ['text', 50, 'Text', 'box'], ['more', 62, 'More', 'visuals', 1]]],
  ['Calculations', [['fx', 94, 'New visual', 'calculation', 1], ['calc', 58, 'New', 'measure'], ['quick', 62, 'Quick', 'measure']]],
  ['Sensitivity', [['sens', 73, 'Sensitivity', '', 1]]],
  ['Share', [['publish', 55, 'Publish']]],
  ['Copilot', [['copilot', 54, 'Copilot']]],
];

function RibbonBar() {
  return (
    <>
      <TabRow>
        {tabs.map(([name, w, kind]) => <Tab key={name} $w={w} $active={kind === 'active'} $context={kind === 'ctx'}>{name}</Tab>)}
        <ShareButton>
          <Svg s={20} sw={1.5}><path d="M6 5H1v14h15v-5M12 1l7 6-7 6V9c-4 0-6 2-8 6 0-6 3-10 8-10z" /></Svg>Share<Chevron s={14} sw={1} />
        </ShareButton>
      </TabRow>
      <Ribbon>
        <Group>
          <GroupBody>
            <ToolButton $w={53} $off><BigIcon>{big.paste}</BigIcon><ToolLine>Paste</ToolLine></ToolButton>
            <ClipList>
              <ClipButton><Svg s={20}><path d="M6 1c0 5 4 9 7 14M14 1c0 5-4 9-7 14" stroke={c.line} /><circle cx="6" cy="17" r="2.300" stroke="#2b88d8" /><circle cx="14" cy="17" r="2.300" stroke="#2b88d8" /></Svg>Cut</ClipButton>
              <ClipButton><Svg s={20} stroke={c.line}><path d="M7 17H1V1h9v3" /><path d="M7 4h7l5 5v10H7zM14 4v5h5M10 12h6M10 15h6" fill="#fff" /></Svg>Copy</ClipButton>
              <ClipButton><Svg s={20}><path d="m2 9 7-4 7 7-5 7z" fill="#fbd9a5" stroke="#d9730a" /><path d="m2 9 5 2 4 8 2-2-7-9z" fill="#ee8a1d" stroke="none" /><path d="m9 5 2-1 2 2 4-5 3 3-5 4 2 2-1 2z" fill="#fff" stroke={c.line} /></Svg>Format painter</ClipButton>
            </ClipList>
          </GroupBody>
          <GroupLabel>Clipboard</GroupLabel>
        </Group>
        {groups.map(([label, tools]) => (
          <Group key={label}>
            <GroupBody>
              {tools.map(([icon, w, a, b, menu]) => (
                <ToolButton key={icon} $w={w} $off={icon === 'sens'}>
                  {icon === 'copilot' ? <BigIcon><CopilotMark s={40} id="ribbon" /></BigIcon> : <BigIcon>{big[icon]}</BigIcon>}
                  <ToolLine>{a}</ToolLine>
                  <ToolLine>{b}{menu && <Chevron />}</ToolLine>
                </ToolButton>
              ))}
            </GroupBody>
            <GroupLabel>{label}</GroupLabel>
          </Group>
        ))}
        <Collapse><IconButton $w={14} $h={14} aria-label="Collapse ribbon"><Svg s={12} sw={2}><path d="m1 9 5-5 5 5" /></Svg></IconButton></Collapse>
      </Ribbon>
    </>
  );
}

function LeftRail() {
  return (
    <Rail>
      <RailButton $active aria-label="Report view"><Svg s={20}><path d="M1 1v17h18" /><path d="M4 5h3v10H4zM9.500 9h3v6h-3zM15 2h3v13h-3z" fill="#c8c6c4" /></Svg></RailButton>
      <RailButton aria-label="Table view"><Svg s={20}><path d="M1 1h18v18H1zM1 4.500h18M1 9h18M1 14h18M7 4.500V19M13 4.500V19" /></Svg></RailButton>
      <RailButton aria-label="Model view"><Svg w={24} h={24}><path d="M1 8h9v9H1zM1 11h9M14 1h9v9h-9zM14 4h9M14 14h9v9h-9zM14 17h9M6 8V5h8M6 17v3h8" /></Svg></RailButton>
      <RailButton aria-label="DAX query view"><Svg w={24} h={22} overflow="visible"><path d="M7 13V2h8l4 5v12c0 1-1 2-3 2M14 2v5h5M22 8v9c0 2-1 4-3 4" /><text x="0" y="21" fontFamily="Open Sans" fontWeight="700" fontSize="8" fill="#797775" stroke="none">DAX</text></Svg></RailButton>
    </Rail>
  );
}

const MultiCard = ({ w, thumb, rows }) => (
  <MultiRow $w={w}>
    <MultiList>
      {rows.map(([name, n]) => <MultiItem key={name}><dt>{name}</dt><dd>{n}</dd><dd>Count of delivery_id</dd></MultiItem>)}
    </MultiList>
    <ScrollThumb $h={thumb} />
  </MultiRow>
);

const Metric = ({ w, top, value, label }) => (
  <BigCard $w={w} $top={top}><BigNumber>{value}</BigNumber><BigLabel>{label}</BigLabel></BigCard>
);

const Spacer = styled.div`
  flex: 0 0 ${(p) => p.$w}px;
`;

const handles = [
  ['top:-2px;left:-2px;width:12px;height:12px;border-width:5px 0 0 5px;', 1],
  ['top:-2px;right:-2px;width:12px;height:12px;border-width:5px 5px 0 0;', 1],
  ['bottom:-2px;left:-2px;width:12px;height:12px;border-width:0 0 5px 5px;', 1],
  ['bottom:-2px;right:-2px;width:12px;height:12px;border-width:0 5px 5px 0;', 1],
  ['top:-2px;left:calc(50% - 7px);width:15px;height:5px;'],
  ['bottom:-2px;left:calc(50% - 7px);width:15px;height:5px;'],
  ['left:-2px;top:calc(50% - 8px);width:5px;height:16px;'],
  ['right:-2px;top:calc(50% - 8px);width:5px;height:16px;'],
];

const drivers = [['Sean O…', '#5d6690', 74], ['Sheila …', '#8c7f4b', 68], ['Spence…', '#6c4e5a', 74], ['Vincent…', '#3a446f', 73], ['Whitne…', '#e3d3bf', 72]];

function ReportSheet() {
  return (
    <Sheet>
      <SheetLeft>
        <Row $h={148}>
          <MultiCard w={269} thumb={143} rows={[['Completed', 70], ['Failed', 70]]} />
          <Spacer $w={62} />
          <Metric w={276} top={34} value="12.00" label="Average of avg_delivery_time" />
          <MultiCard w={316} thumb={21} rows={[['Joshuabury to Nicolestad', 2], ['Lauraborough', 2]]} />
        </Row>
        <Row $h={350}>
          <CardColumn>
            <Metric w={280} top={57} value="49.12" label="Average of avg_fuel_consumed" />
            <Metric w={280} top={57} value="4.50" label="Average of driver_rating" />
          </CardColumn>
          <Spacer $w={58} />
          <div>
            <VisualTools>
              <IconButton $w={21} aria-label="Filters on this visual"><Svg s={20}><path d="M1 1h18l-7 9v9H8v-9z" /></Svg></IconButton>
              <IconButton $w={21} aria-label="Focus mode"><Svg s={20}><path d="M9 2H1v17h17v-8M12 1h7v7M19 1l-8 8M1 11h8v8" /></Svg></IconButton>
              <IconButton $w={21} aria-label="More options"><Svg s={20} stroke="none" fill="currentColor"><circle cx="2" cy="10" r="2" /><circle cx="10" cy="10" r="2" /><circle cx="18" cy="10" r="2" /></Svg></IconButton>
            </VisualTools>
            <VisualFrame>
              {handles.map(([at, corner]) => <Handle key={at} $at={at} $corner={corner} />)}
              <VisualTitle $pad={5}>driver_name, total_deliveries_by_driver and driver_rating</VisualTitle>
              <Legend $pad={5} $h={36}>
                <li><b>driver_name</b></li>
                <li><IconButton $w={14} aria-label="Previous drivers"><Svg w={12} h={16} stroke="#fff" sw={1.8}><path d="M10 1v14L2 8z" /></Svg></IconButton></li>
                {drivers.map(([n, col, w]) => <LegendItem key={n} $color={col} $w={w}>{n}</LegendItem>)}
              </Legend>
              <DriverScatter />
            </VisualFrame>
          </div>
        </Row>
        <Row $h={240}>
          <PieVisual>
            <VisualTitle $lh={23}>Count of delivery_id by</VisualTitle>
            <VisualTitle $lh={23}>delivery_status</VisualTitle>
            <Row $h={190}>
              <PieBox><StatusPie /></PieBox>
              <SideLegend>
                <li><b>delivery_st…</b></li>
                <LegendItem $color={c.blue}>Compl…</LegendItem>
                <LegendItem $color={c.gold}>Failed</LegendItem>
              </SideLegend>
            </Row>
          </PieVisual>
          <div>
            <VisualTitle $lh={23}>Sum of total_deliveries by Month</VisualTitle>
            <MonthChart />
          </div>
        </Row>
      </SheetLeft>
      <SheetRight>
        <div>
          <VisualTitle $pad={4}>Sum of total_deliveries and Average of</VisualTitle>
          <VisualTitle $pad={4}>fuel_efficiency by vehicle_type</VisualTitle>
          <Legend $pad={5} $h={36}>
            <LegendItem $color={c.blue}>Sum of total_deliveries</LegendItem>
            <LegendItem $color={c.gold}>Average of fuel_efficiency</LegendItem>
          </Legend>
          <VehicleBars />
        </div>
        <div>
          <VisualTitle>Sum of avg_delivery_time and Sum of</VisualTitle>
          <VisualTitle>avg_fuel_consumed by route_name</VisualTitle>
          <Legend $pad={1} $h={38}>
            <LegendItem $color={c.blue}>Sum of avg_delivery_time</LegendItem>
            <LegendItem $color={c.gold}>Sum of avg_fuel_consu…</LegendItem>
          </Legend>
          <RouteChart />
        </div>
      </SheetRight>
      <BackButton aria-label="Back"><Svg s={32} sw={3}><circle cx="16" cy="16" r="14" /><path d="M26 16H7M15 8l-8 8 8 8" /></Svg></BackButton>
    </Sheet>
  );
}

const FieldWell = ({ label, hint, field, h }) => (
  <>
    <WellLabel>{label}</WellLabel>
    <WellBox $h={h}>
      {hint && <EmptyWell>{hint}</EmptyWell>}
      {field && (
        <Chip>
          <span>{field}</span>
          <IconButton $w={14} aria-label={`${field} options`}><Svg w={14} h={8} sw={1.1}><path d="m1 1 6 6 6-6" /></Svg></IconButton>
          <IconButton $w={12} aria-label={`Remove ${field}`}><Cross /></IconButton>
        </Chip>
      )}
    </WellBox>
  </>
);

function Visualizations() {
  return (
    <VizPane>
      <PaneHead><h2>Visualizations</h2><IconButton $w={16} aria-label="Collapse Visualizations"><Angles /></IconButton></PaneHead>
      <BuildTitle>Build visual</BuildTitle>
      <BuildTabs>
        <BuildTab $active aria-label="Build visual"><Svg s={32} stroke={c.ink}><path d="M1 2h24" strokeWidth="1.600" /><path d="M2 9h28v8H2zM2 22h28v8H2z" fill={c.green} strokeDasharray="2 1.500" /></Svg></BuildTab>
        <BuildTab aria-label="Format visual"><Svg s={32} stroke={c.ink}><path d="M3 24V12h8V2h8v8h6" /><path d="M11 24V12M19 10v5" /><path d="m29 10-14 12 3 3 11-13zM15 22c-4 0-4 5-9 6 4 3 11 2 12-3" fill="#fff" /></Svg></BuildTab>
        <BuildTab aria-label="Analytics"><Svg s={32} stroke={c.ink}><circle cx="13" cy="14" r="12" /><path d="m2 15 6-5 4 4 8-6 5 2M8 24v-7M13 25v-7M18 24v-9" /><path d="m22 23 8 8" strokeWidth="3" /></Svg></BuildTab>
      </BuildTabs>
      <Svg w={225} h={11} stroke="#8a8886" sw={1}><path d="M0 10.500h20l10-10 10 10h185" /></Svg>
      <VizGrid>
        {vizIcons.map(([name, art]) => <VizButton key={name} aria-label={name} $active={name === 'Scatter chart'}><Svg s={24} overflow="visible">{art}</Svg></VizButton>)}
      </VizGrid>
      <MoreViz aria-label="More visuals"><Svg w={24} h={6} stroke="none" fill={c.ink}><path d="M3 2h2v2H3zM11 2h2v2h-2zM19 2h2v2h-2z" /></Svg></MoreViz>
      <Wells>
        <WellList>
          <FieldWell label="Values" hint="Add data fields here" />
          <FieldWell label="X Axis" field="total_deliveries_by_dri..." h={45} />
          <FieldWell label="Y Axis" field="driver_rating" />
          <FieldWell label="Legend" field="driver_name" />
          <FieldWell label="Size" />
        </WellList>
        <WellScroll />
      </Wells>
    </VizPane>
  );
}

const tables = ['gold avg_distance_cov...', 'gold driver_performan...', 'gold fleet_delivery_su...', 'gold fleet_performanc...', 'gold transportation_g...', 'silver_db Silver_table'];

function DataFields() {
  return (
    <DataPane>
      <PaneHead><h2>Data</h2><IconButton $w={16} aria-label="Collapse Data"><Angles /></IconButton></PaneHead>
      <DataSearch><Lens s={18} sw={1.2} /><BareInput $tone="#797775" placeholder="Search" aria-label="Search data" /></DataSearch>
      {tables.map((t) => (
        <TableRow key={t}>
          <Svg w={10} h={14} sw={1.1}><path d="m2 1 6 6-6 6" /></Svg><TableIcon checked={t.includes('transport')} />{t}
        </TableRow>
      ))}
    </DataPane>
  );
}

const taskIcons = [
  ['Task view', <><path d="M3 11h18v18H3z" fill="#6a6a6a" /><path d="M10 3h20v20H10z" fill="#f4f4f4" /><path d="M10 11h11v12H10z" fill="#b4b4b4" /></>],
  ['Copilot', <CopilotMark s={32} id="task" />],
  ['File Explorer', <><path d="M1 4h11l3 4h16v8H1z" fill="#e0a000" /><path d="M1 8h30v22H1z" fill="#ffcf48" /><path d="M6 30v-6c0-1 1-2 2-2h16c1 0 2 1 2 2v6z" fill="#0f6cbd" /><path d="M10 26h12" stroke="#0a4a86" strokeWidth="1.600" /></>, 1],
  ['Teams', <><circle cx="17" cy="6" r="5" fill="#7b83eb" /><circle cx="26" cy="7" r="3.500" fill="#5059c9" /><path d="M20 12h11v10c0 6-7 7-9 3z" fill="#5059c9" /><path d="M9 12h15v12c0 9-14 9-15 0z" fill="#7b83eb" /><rect x="1" y="8" width="16" height="16" rx="1" fill="#464eb8" /><text x="9" y="20" textAnchor="middle" fontFamily="Open Sans" fontWeight="700" fontSize="12" fill="#fff">T</text></>],
  ['Edge', <><circle cx="16" cy="16" r="15" fill="#1687d6" /><path d="M1 16C1 6 8 1 16 1c10 0 16 7 15 14 0 5-5 7-10 5 3-7-2-11-8-11C7 9 3 11 1 16z" fill="#35c1d5" /><path d="M23 3c6 3 9 8 8 13-1 4-6 5-10 4 2-3 1-6 0-7 5-1 6-5 2-10z" fill="#5ddc6c" /><path d="M11 15c-1 9 6 14 15 12-4 4-10 5-15 2-5-4-5-11 0-14z" fill="#0c4f9e" /></>, 1],
  ['Microsoft Store', <><path d="M10 7V2h12v5" fill="none" stroke="#35b5ea" strokeWidth="2" /><rect x="2" y="6" width="28" height="25" rx="3" fill="#f3f3f3" /><path d="M10 12h5v5h-5z" fill="#f25022" /><path d="M17 12h5v5h-5z" fill="#7fba00" /><path d="M10 19h5v5h-5z" fill="#00a4ef" /><path d="M17 19h5v5h-5z" fill="#ffb900" /></>],
  ['Dropbox', <><path d="M1 1h30v30H1z" fill="#0061fe" /><path d="m11 8 5 3-5 4-5-4zM21 8l5 3-5 4-5-4zM11 15l5 3-5 4-5-4zM21 15l5 3-5 4-5-4zM16 19l5 3-5 4-5-4z" fill="#fff" transform="translate(0 -1)" /></>],
  ['Scrivener', <path d="M20 0c-5 1-9 5-9 10 0 3 7 7 7 10 0 4-6 7-7 12 5-2 10-7 10-12 0-4-6-7-6-10 0-4 4-6 5-10z" fill="#fff" stroke="#fff" strokeWidth="2" />],
  ['Microsoft 365', <><path d="m16 1 13 7v10l-10-6-9 5v12l-6-5V8z" fill="#7c6fe0" /><path d="m16 1 13 7v15l-8-4V12l-8-4z" fill="#45b4e8" /><path d="m29 15-1 9-12 7-10-6 3-1 12-5z" fill="#b77be0" /><path d="m16 11 5 3v5l-5 3-5-3v-5z" fill="#1b2d37" /></>],
  ['GitHub', <><circle cx="16" cy="16" r="15" fill="#7a2da0" /><circle cx="16" cy="16" r="11" fill="#fff" /><path d="M12 27v-4c-4 1-5-2-6-3M20 27v-5c0-1 0-2-1-2 4-1 6-3 5-7l-1-3V7l-4 2h-6L9 7v3c-3 5-1 9 4 10l-1 2" fill="#7a2da0" /></>],
  ['SQL Server Management Studio', <><path d="M5 4c0-4 14-4 14 0v14H5z" fill="#ffd21f" /><ellipse cx="12" cy="4" rx="7" ry="3" fill="#f3b07a" /><path d="M22 1h8v7M2 24v7h7" fill="none" stroke="#3fa34d" strokeWidth="2.400" /><path d="m15 17 13 13M28 17 15 30" stroke="#9a63c8" strokeWidth="3" /></>, 1],
  ['Visual Studio Code', <><path d="m22 1 8 3v24l-8 3L9 18l-5 4-3-2 5-4-5-4 3-2 5 4z" fill="#1f8ad2" /><path d="m22 1 8 3v24l-8 3z" fill="#3aaef5" /><path d="m22 10-8 6 8 6z" fill="#1b2d37" /></>, 1],
  ['Word', <><path d="M8 2h23v28H8z" fill="#185abd" /><path d="M8 2h23v7H8z" fill="#41a5ee" /><path d="M8 9h23v7H8z" fill="#2b7cd3" /><rect x="1" y="8" width="16" height="16" rx="1" fill="#103f91" /><text x="9" y="20" textAnchor="middle" fontFamily="Open Sans" fontWeight="700" fontSize="11" fill="#fff">W</text></>, 1],
  ['Photos', <><rect x="3" y="3" width="26" height="28" rx="3" fill="#2466c8" /><path d="m4 29 12-14 12 14c-5 2-19 2-24 0z" fill="#4fd3f5" /><path d="m16 15-8 9 13 6h5l2-1z" fill="#2ba4e8" /><circle cx="23" cy="8" r="2.500" fill="#fff" /></>, 1],
  ['Acrobat', <><rect x="3" y="1" width="27" height="30" rx="4" fill="#b30b00" /><path d="M8 24c3 1 9-7 8-16-1-3-2 0-1 3 2 6 6 9 10 8 2-1-1-2-5-2-5 0-12 4-12 7z" fill="none" stroke="#fff" strokeWidth="1.800" /></>, 1],
  ['Chrome', <><circle cx="15" cy="17" r="14" fill="#fbc116" /><path d="M3 10a14 14 0 0 1 24 0H15l-6 10z" fill="#e33b2e" /><path d="m3 10 7 11 8 2-4 8A14 14 0 0 1 3 10z" fill="#229342" /><circle cx="15" cy="17" r="6.500" fill="#fff" /><circle cx="15" cy="17" r="5" fill="#1a73e8" /><ellipse cx="24" cy="5" rx="8" ry="9" fill="#8c1c3c" /><path d="M20 1c6 1 8 4 6 9" stroke="#c25b86" strokeWidth="2" fill="none" /></>, 1],
  ['Power BI', <><rect x="17" y="0" width="10" height="31" rx="1" fill="#d9930f" /><rect x="11" y="8" width="9" height="23" rx="1" fill="#eebd2c" /><rect x="5" y="16" width="9" height="15" rx="1" fill="#f9dc6b" /></>, 1, 1],
];

function WindowsTaskbar() {
  return (
    <Taskbar>
      <Weather aria-label="Weather">
        <Svg w={36} h={36} stroke="none"><circle cx="14" cy="22" r="12" fill="#f59320" /><path d="M3 18a12 12 0 0 1 14-8l-2 10z" fill="#f6b53c" /><rect x="12" y="20" width="17" height="9" rx="4.500" fill="#b9cdf5" /><circle cx="22" cy="20" r="5" fill="#d8e4fb" /><circle cx="23" cy="10" r="10" fill="#ff99a4" /><text x="23" y="15" textAnchor="middle" fontFamily="Open Sans" fontSize="14" fill="#1b1b1b">9</text></Svg>
      </Weather>
      <TaskButton aria-label="Start"><Svg s={30} stroke="none" fill="#35b8f2"><path d="M1 1h13.500v13.500H1z" fill="#6cd3fb" /><path d="M15.500 1H29v13.500H15.500z" fill="#4cc8fa" /><path d="M1 15.500h13.500V29H1z" fill="#38bdf8" /><path d="M15.500 15.500H29V29H15.500z" fill="#149df2" /></Svg></TaskButton>
      <TaskSearch>
        <Lens s={20} sw={2} /><BareInput $tone="#e1e1e1" placeholder="Search" aria-label="Search Windows" />
        <Svg w={54} h={32} stroke="none"><path d="m5 3 28 7-4 12L3 15z" fill="#1f8a94" /><path d="m5 8 28 6-2 14-30-9z" fill="#e7eef2" /><path d="m5 11 27 6" stroke="#1f8a94" strokeWidth="2" /><path d="M5 16h8M6 19h7M17 19h6M17 22h6" stroke="#5b7482" strokeWidth="1.400" /><path d="m26 18 5 7M31 18l-4 6" stroke="#2f7fb8" strokeWidth="2" /><path d="M41 6V2h6v4" fill="none" stroke="#8a8a9a" strokeWidth="1.400" /><rect x="36" y="6" width="16" height="25" rx="2" fill="#63c4b4" /><path d="M40 9v18M44 9v18M48 9v18" stroke="#3a9c90" strokeWidth="1.400" /></Svg>
      </TaskSearch>
      {taskIcons.map(([name, art, run, active]) => (
        <TaskButton key={name} aria-label={name} $run={run} $active={active}><Svg s={32} stroke="none">{art}</Svg></TaskButton>
      ))}
      <Tray>
        <IconButton $w={40} aria-label="Show hidden icons"><Svg w={14} h={9} sw={1.8}><path d="m1 8 6-6 6 6" /></Svg></IconButton>
        <IconButton $w={40} aria-label="OneDrive"><Svg w={22} h={20}><path d="M5 15c-5 0-5-7 0-7 1-7 11-6 11-1 7 0 6 8 1 8z" fill="#8a8583" stroke="none" /><path d="m5 2 14 16" stroke="#fff" /></Svg></IconButton>
        <TrayText $w={56} $align="center">ENG<br />IN</TrayText>
        <IconButton $w={38} aria-label="Network"><Svg w={20} h={16} sw={1.8}><path d="M1 6c5-6 13-6 18 0M4 9c4-4 8-4 12 0M7 12c2-2 4-2 6 0" /><circle cx="10" cy="14" r="1.500" fill="#fff" stroke="none" /></Svg></IconButton>
        <IconButton $w={22} aria-label="Volume"><Svg w={20} h={16}><path d="M1 5h4l5-4v14l-5-4H1zM13 5l6 6M19 5l-6 6" /></Svg></IconButton>
        <IconButton $w={38} aria-label="Battery"><Svg w={22} h={18}><rect x="2" y="5" width="16" height="11" rx="3" /><path d="M5 8h10v5H5z" fill="#fff" /><path d="M20 8v5" strokeWidth="2" /><path d="M6 0 1 7h4l-1 5 5-7H5z" fill="#fff" stroke="#33241d" strokeWidth=".8" /></Svg></IconButton>
        <TrayText $w={89} $align="right">16:01<br />05-04-2025</TrayText>
      </Tray>
    </Taskbar>
  );
}

export default function App() {
  return (
    <Shell>
      <GlobalStyle />
      <TitleStrip />
      <RibbonBar />
      <Work>
        <LeftRail />
        <Center>
          <Stage>
            <Canvas><ReportSheet /></Canvas>
            <Filters>
              <IconButton $w={16} aria-label="Expand Filters"><Angles left /></IconButton>
              <Svg w={16} h={16} sw={1.8}><path d="M15 1v14L8 10H2V6h6z" /></Svg>
              <FilterLabel>Filters</FilterLabel>
            </Filters>
          </Stage>
          <PageBar>
            <ViewButton $w={54} $active aria-label="Desktop layout"><Svg w={24} h={19}><path d="M1 1h22v13H1zM12 14v4M7 18h10" /></Svg></ViewButton>
            <ViewButton $w={56} aria-label="Mobile layout"><Svg w={16} h={25}><rect x="1" y="1" width="14" height="23" rx="1" /><path d="M6 21h4" /></Svg></ViewButton>
            <ViewButton $w={20} $color="#c8c6c4" aria-label="Previous page"><Svg w={6} h={10} stroke="none"><path d="M6 0v10L0 5z" fill="currentColor" /></Svg></ViewButton>
            <ViewButton $w={30} $color="#c8c6c4" aria-label="Next page"><Svg w={6} h={10} stroke="none"><path d="M0 0v10l6-5z" fill="currentColor" /></Svg></ViewButton>
            <PageTab>Page 1</PageTab>
            <AddPage aria-label="New page"><Svg s={14} sw={4}><path d="M7 0v14M0 7h14" /></Svg></AddPage>
          </PageBar>
        </Center>
        <Visualizations />
        <DataFields />
      </Work>
      <StatusBar>
        Page 1 of 1
        <ZoomTools>
          <IconButton $w={8} aria-label="Zoom out"><Svg w={8} h={10} sw={2}><path d="M1 5h6" /></Svg></IconButton>
          <ZoomSlider type="range" min="10" max="200" defaultValue="86" aria-label="Zoom" />
          <IconButton $w={10} aria-label="Zoom in"><Svg s={10} sw={2}><path d="M5 0v10M0 5h10" /></Svg></IconButton>
          <ZoomValue>83%</ZoomValue>
          <IconButton $w={22} aria-label="Fit to page"><Svg w={21} h={16}><path d="M1 1h19v14H1zM4 6V4h3M14 4h3v2M4 10v2h3M14 12h3v-2" /></Svg></IconButton>
        </ZoomTools>
      </StatusBar>
      <WindowsTaskbar />
    </Shell>
  );
}
